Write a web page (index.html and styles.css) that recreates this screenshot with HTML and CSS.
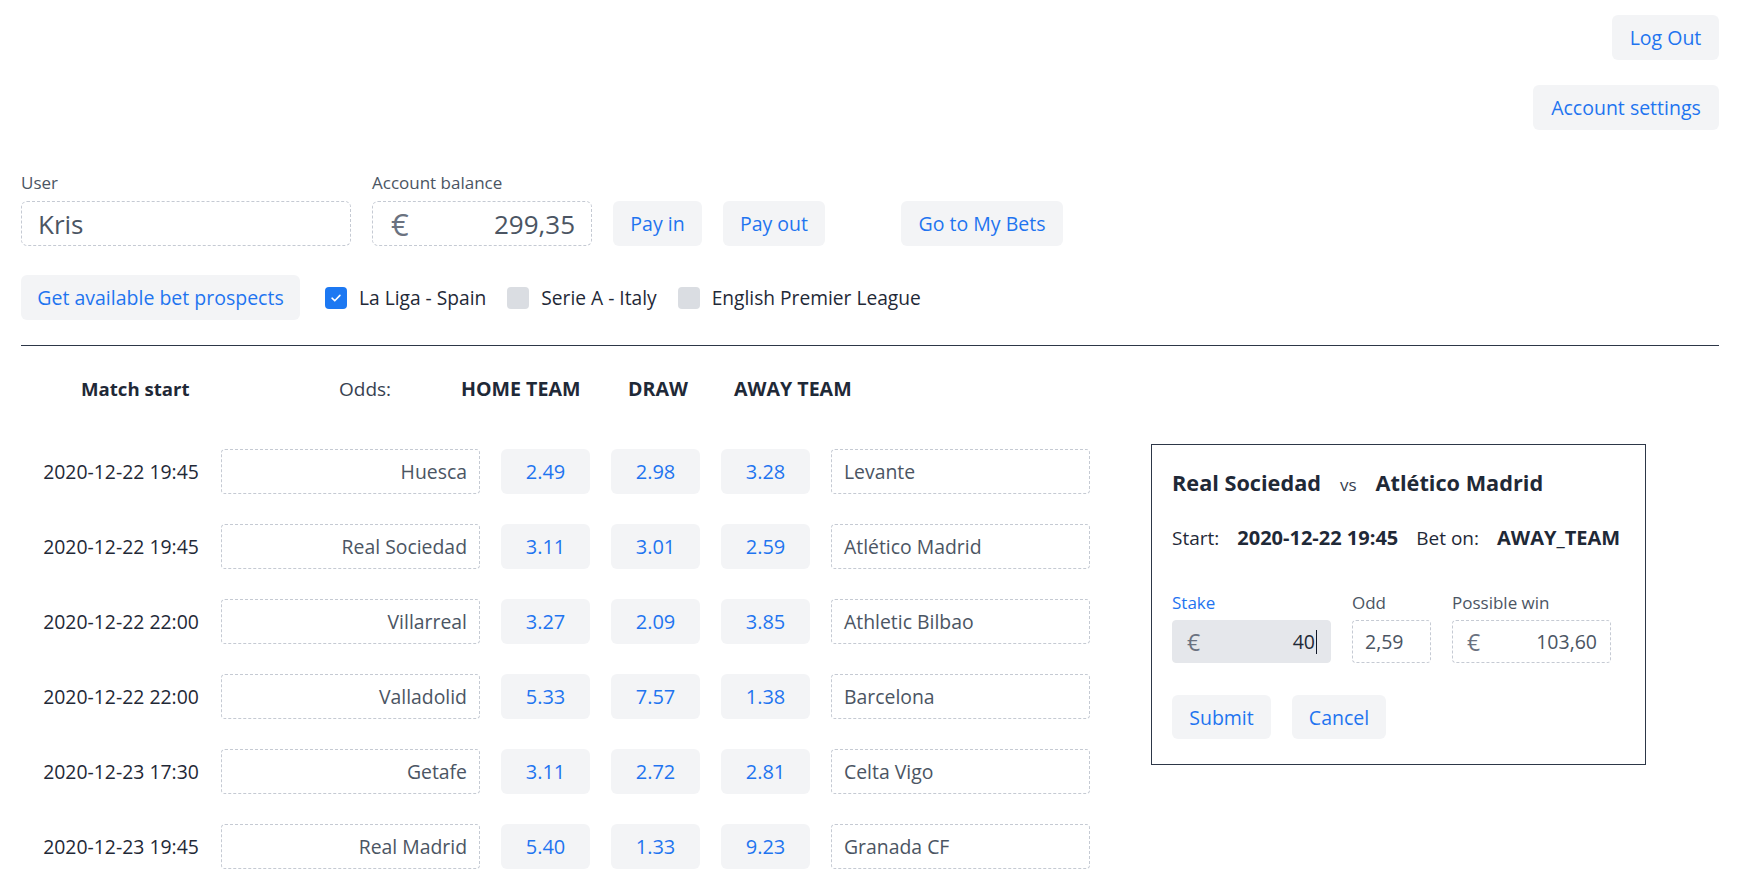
FILE: index.html
```html
<!DOCTYPE html>
<html lang="en">
<head>
<meta charset="utf-8">
<title>Bets</title>
<link rel="stylesheet" href="styles.css">
</head>
<body>
<div class="page">
  <div class="top-actions">
    <button class="btn btn-logout">Log Out</button>
    <button class="btn btn-settings">Account settings</button>
  </div>

  <div class="account-row">
    <div class="field">
      <label class="field-label">User</label>
      <div class="big-input user-input">Kris</div>
    </div>
    <div class="field">
      <label class="field-label">Account balance</label>
      <div class="big-input balance-input"><span class="euro">€</span><span class="amount">299,35</span></div>
    </div>
    <button class="btn btn-payin">Pay in</button>
    <button class="btn btn-payout">Pay out</button>
    <button class="btn btn-mybets">Go to My Bets</button>
  </div>

  <div class="filter-row">
    <button class="btn btn-prospects">Get available bet prospects</button>
    <label class="check"><span class="box checked"><svg viewBox="0 0 16 16" width="14" height="14"><path d="M3.5 8.2 L6.6 11.2 L12.5 5" fill="none" stroke="#fff" stroke-width="1.8" stroke-linecap="round" stroke-linejoin="round"/></svg></span>La Liga - Spain</label>
    <label class="check"><span class="box"></span>Serie A - Italy</label>
    <label class="check"><span class="box"></span>English Premier League</label>
  </div>

  <hr class="divider">

  <div class="main">
    <div class="matches">
      <div class="head-row">
        <span class="h-match">Match start</span>
        <span class="h-odds">Odds:</span>
        <span class="h-home">HOME TEAM</span>
        <span class="h-draw">DRAW</span>
        <span class="h-away">AWAY TEAM</span>
      </div>

      <div class="match-row">
        <div class="date">2020-12-22 19:45</div>
        <div class="team home">Huesca</div>
        <button class="btn odd">2.49</button>
        <button class="btn odd">2.98</button>
        <button class="btn odd">3.28</button>
        <div class="team away">Levante</div>
      </div>
      <div class="match-row">
        <div class="date">2020-12-22 19:45</div>
        <div class="team home">Real Sociedad</div>
        <button class="btn odd">3.11</button>
        <button class="btn odd">3.01</button>
        <button class="btn odd">2.59</button>
        <div class="team away">Atlético Madrid</div>
      </div>
      <div class="match-row">
        <div class="date">2020-12-22 22:00</div>
        <div class="team home">Villarreal</div>
        <button class="btn odd">3.27</button>
        <button class="btn odd">2.09</button>
        <button class="btn odd">3.85</button>
        <div class="team away">Athletic Bilbao</div>
      </div>
      <div class="match-row">
        <div class="date">2020-12-22 22:00</div>
        <div class="team home">Valladolid</div>
        <button class="btn odd">5.33</button>
        <button class="btn odd">7.57</button>
        <button class="btn odd">1.38</button>
        <div class="team away">Barcelona</div>
      </div>
      <div class="match-row">
        <div class="date">2020-12-23 17:30</div>
        <div class="team home">Getafe</div>
        <button class="btn odd">3.11</button>
        <button class="btn odd">2.72</button>
        <button class="btn odd">2.81</button>
        <div class="team away">Celta Vigo</div>
      </div>
      <div class="match-row">
        <div class="date">2020-12-23 19:45</div>
        <div class="team home">Real Madrid</div>
        <button class="btn odd">5.40</button>
        <button class="btn odd">1.33</button>
        <button class="btn odd">9.23</button>
        <div class="team away">Granada CF</div>
      </div>
    </div>

    <div class="bet-panel">
      <div class="bet-title">
        <span class="team-name">Real Sociedad</span>
        <span class="vs">vs</span>
        <span class="team-name">Atlético Madrid</span>
      </div>
      <div class="bet-info">
        <span>Start:</span>
        <strong>2020-12-22 19:45</strong>
        <span>Bet on:</span>
        <strong>AWAY_TEAM</strong>
      </div>
      <div class="bet-fields">
        <div class="bf">
          <label class="bf-label active">Stake</label>
          <div class="small-input stake"><span class="euro">€</span><span class="val">40<span class="caret"></span></span></div>
        </div>
        <div class="bf">
          <label class="bf-label">Odd</label>
          <div class="small-input odd-input"><span class="val">2,59</span></div>
        </div>
        <div class="bf">
          <label class="bf-label">Possible win</label>
          <div class="small-input win"><span class="euro">€</span><span class="val">103,60</span></div>
        </div>
      </div>
      <div class="bet-actions">
        <button class="btn btn-submit">Submit</button>
        <button class="btn btn-cancel">Cancel</button>
      </div>
    </div>
  </div>
</div>
</body>
</html>
```

FILE: styles.css
```css
* { box-sizing: border-box; }

body {
  margin: 0;
  background: #ffffff;
  font-family: "Open Sans", "Noto Sans", sans-serif;
  color: #1f2937;
  font-size: 19px;
}

.page {
  padding: 15px 20px 0 21px;
}

.btn {
  font-family: inherit;
  background: #f3f4f6;
  color: #1f74f0;
  border: none;
  border-radius: 6px;
  height: 45px;
  padding: 0;
  font-size: 19.5px;
  cursor: pointer;
}

.top-actions {
  display: flex;
  flex-direction: column;
  align-items: flex-end;
  gap: 25px;
}
.btn-logout { width: 107px; }
.btn-settings { width: 186px; }

.account-row {
  display: flex;
  align-items: flex-end;
  margin-top: 43px;
}
.field { display: flex; flex-direction: column; margin-right: 21px; }
.field-label {
  font-size: 17px;
  line-height: 20px;
  color: #4b5563;
  margin-bottom: 8px;
}
.big-input {
  height: 45px;
  border: 1px dashed #c5cad3;
  border-radius: 6px;
  display: flex;
  align-items: center;
  padding: 0 16px;
  font-size: 26px;
  color: #4b5563;
}
.user-input { width: 330px; }
.balance-input { width: 220px; justify-content: space-between; padding: 0 16px 0 18px; }
.balance-input .euro { color: #6b7280; font-size: 31px; }

.btn-payin { width: 89px; margin-right: 21px; }
.btn-payout { width: 102px; margin-right: 76px; }
.btn-mybets { width: 162px; }

.filter-row {
  display: flex;
  align-items: center;
  margin-top: 29px;
}
.btn-prospects { width: 279px; margin-right: 25px; }
.check {
  display: flex;
  align-items: center;
  margin-right: 21px;
  font-size: 19.2px;
  color: #1f2937;
}
.box {
  width: 22px;
  height: 22px;
  border-radius: 4px;
  background: #dadde2;
  margin-right: 12px;
  display: flex;
  align-items: center;
  justify-content: center;
}
.box.checked { background: #1c78f2; }

.divider {
  border: none;
  border-top: 1px solid #2d3748;
  margin: 25px 0 0 0;
}

.main {
  display: flex;
  align-items: flex-start;
}
.matches { width: 1069px; }

.head-row {
  display: grid;
  grid-template-columns: 258px 122px 167px 106px auto;
  padding-left: 60px;
  margin-top: 31px;
  line-height: 24px;
  font-size: 19.6px;
}
.head-row span { font-weight: 700; }
.head-row .h-match { font-size: 18.6px; }
.head-row .h-odds { font-weight: 400; color: #374151; font-size: 19px; }

.match-row {
  display: flex;
  align-items: center;
  height: 45px;
  margin-top: 30px;
}
.head-row + .match-row { margin-top: 48px; }

.date {
  width: 200px;
  text-align: center;
  font-size: 19.4px;
  color: #1f2937;
}
.team {
  width: 259px;
  height: 45px;
  border: 1px dashed #c5cad3;
  border-radius: 4px;
  display: flex;
  align-items: center;
  padding: 0 12px;
  font-size: 19.4px;
  color: #4b5563;
}
.team.home { justify-content: flex-end; }
.team.away { justify-content: flex-start; }
.odd {
  width: 89px;
  margin-left: 21px;
  font-size: 20px;
}
.odd:last-of-type { margin-right: 21px; }

.bet-panel {
  width: 495px;
  height: 321px;
  margin-left: 61px;
  margin-top: 98px;
  border: 1px solid #2d3748;
  padding: 25px 20px 0 20px;
}
.bet-title {
  display: flex;
  align-items: baseline;
  gap: 19px;
  line-height: 26px;
}
.team-name { font-weight: 700; font-size: 21.7px; color: #1f2937; }
.vs { font-size: 17px; color: #374151; }

.bet-info {
  display: flex;
  align-items: baseline;
  gap: 18px;
  margin-top: 28px;
  line-height: 24px;
  font-size: 19px;
  white-space: nowrap;
}
.bet-info > * { flex-shrink: 0; }
.bet-info span { color: #1f2937; }
.bet-info strong { font-weight: 700; font-size: 20px; }

.bet-fields {
  display: flex;
  gap: 21px;
  margin-top: 43px;
}
.bf { display: flex; flex-direction: column; }
.bf-label {
  font-size: 17px;
  line-height: 20px;
  color: #4b5563;
  margin-bottom: 7px;
}
.bf-label.active { color: #1f74f0; }
.small-input {
  height: 43px;
  border: 1px dashed #c5cad3;
  border-radius: 4px;
  display: flex;
  align-items: center;
  justify-content: space-between;
  padding: 0 13px 0 14px;
  font-size: 19.5px;
  color: #4b5563;
}
.small-input .euro { color: #6b7280; font-size: 23px; }
.stake { width: 159px; background: #e5e7eb; border: 1px solid #e5e7eb; }
.stake .val { color: #1f2937; display: flex; align-items: center; }
.caret { display: inline-block; width: 1px; height: 24px; background: #111827; margin-left: 1px; }
.odd-input { width: 79px; padding-left: 12px; }
.win { width: 159px; }

.bet-actions {
  display: flex;
  gap: 21px;
  margin-top: 32px;
}
.btn-submit { width: 99px; height: 44px; }
.btn-cancel { width: 94px; height: 44px; }
```
